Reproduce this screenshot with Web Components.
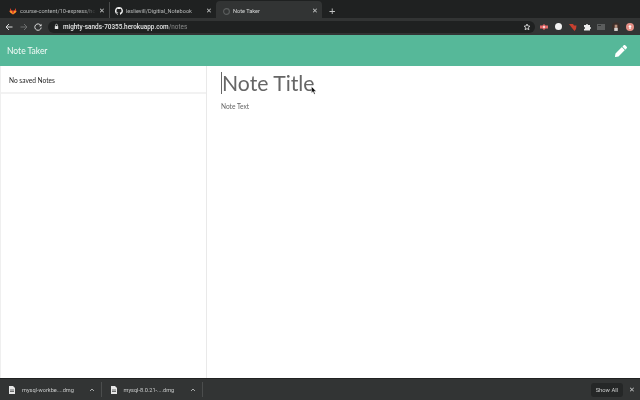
<!DOCTYPE html>
<html>
<head>
<meta charset="utf-8">
<title>Note Taker</title>
<style>
  html, body { margin: 0; height: 100%; overflow: hidden; background: #fff; }
  body { display: flex; flex-direction: column; width: 640px; height: 400px; filter: blur(.3px); }
</style>
</head>
<body>
<tab-strip>
  <browser-tab icon="gitlab" style="width:110px;padding-left:9px">course-content/10-express/ho</browser-tab>
  <browser-tab icon="github" style="width:106px;padding-left:5px">leslievill/Digitial_Notebook</browser-tab>
  <browser-tab icon="globe" active>Note Taker</browser-tab>
</tab-strip>
<url-bar></url-bar>
<note-nav>Note Taker</note-nav>
<note-main>
  <note-list>No saved Notes</note-list>
  <note-editor></note-editor>
</note-main>
<download-shelf>
  <download-item>mysql-workbe....dmg</download-item>
  <download-item>mysql-8.0.21-....dmg</download-item>
</download-shelf>

<script>
class TabStrip extends HTMLElement {
  constructor() {
    super();
    this.attachShadow({ mode: "open" }).innerHTML = `
    <style>
      :host { display: flex; align-items: flex-end; height: 18px; background: #1f2121; flex: none; }
      .plus { color: #c4c6c6; font: 11px/15px "Liberation Sans", sans-serif; margin-left: 7px; align-self: center; padding-top: 4px; }
    </style>
    <slot></slot>
    <span class="plus">+</span>`;
  }
}
customElements.define("tab-strip", TabStrip);

const TAB_ICONS = {
  gitlab: `<svg width="8" height="8" viewBox="0 0 16 16"><path fill="#e24329" d="M8 15 1 9.5 2.8 2l2 5h6.400l2-5L15 9.500z"/><path fill="#fca326" d="M8 15 1 9.500l3.800-2.500zM8 15l7-5.500-3.800-2.500z"/></svg>`,
  github: `<svg width="8" height="8" viewBox="0 0 16 16"><path fill="#f2f2f2" d="M8 0a8 8 0 0 0-2.500 15.600c.4.100.5-.2.500-.4v-1.400c-2.200.5-2.700-1-2.700-1-.4-.9-.9-1.200-.9-1.200-.7-.5.100-.5.100-.5.800.100 1.200.8 1.200.8.700 1.200 1.900.9 2.300.7.100-.5.300-.9.500-1.100-1.800-.2-3.600-.9-3.600-4 0-.9.300-1.600.8-2.100-.1-.2-.4-1 .1-2.100 0 0 .7-.2 2.200.8a7.500 7.500 0 0 1 4 0c1.500-1 2.200-.8 2.200-.8.400 1.100.2 1.900.1 2.100.5.600.8 1.300.8 2.100 0 3.100-1.900 3.700-3.700 3.900.3.300.6.800.6 1.500v2.200c0 .2.100.5.600.4A8 8 0 0 0 8 0z"/></svg>`,
  globe: `<svg width="7" height="7" viewBox="0 0 8 8"><circle cx="4" cy="4" r="3.300" fill="none" stroke="#5b5e5e" stroke-width="1.300"/></svg>`
};

class BrowserTab extends HTMLElement {
  constructor() {
    super();
    this.attachShadow({ mode: "open" });
  }
  connectedCallback() {
    this.shadowRoot.innerHTML = `
    <style>
      :host { display: flex; align-items: center; gap: 3px; box-sizing: border-box; height: 16px; padding: 2px 4px 0 5px; color: #b9bbbb; font: 5.600px "Roboto", sans-serif; }
      :host(:first-child) { border-right: 1px solid #4a4c4c; }
      :host([active]) { background: #323434; border-radius: 4px 4px 0 0; color: #d7d8d8; height: 17px; width: 106px; padding: 3px 4px 0 6px; gap: 3px; }
      .icon { width: 8px; height: 10px; display: flex; align-items: center; justify-content: center; flex: none; }
      .label { flex: 1; white-space: nowrap; overflow: hidden; -webkit-mask-image: linear-gradient(to right, #000 85%, transparent); mask-image: linear-gradient(to right, #000 85%, transparent); }
      .x { flex: none; color: #c9cbcb; font-size: 6.500px; }
    </style>
    <span class="icon">${TAB_ICONS[this.getAttribute("icon")]}</span>
    <span class="label"><slot></slot></span>
    <span class="x">✕</span>`;
  }
}
customElements.define("browser-tab", BrowserTab);

class UrlBar extends HTMLElement {
  constructor() {
    super();
    this.attachShadow({ mode: "open" }).innerHTML = `
    <style>
      :host { display: flex; align-items: center; height: 17px; background: #323434; flex: none; padding: 0 6px 0 5px; }
      .nav { display: flex; gap: 6.500px; align-items: center; flex: none; margin-right: 6px; }
      .pill { flex: 1; display: flex; align-items: center; height: 12px; background: #1f2121; border-radius: 6px; padding: 0 4px 0 6px; gap: 4px; font: 500 6.400px "Roboto", sans-serif; color: #e4e5e5; }
      .pill .path { color: #8a8c8c; font-weight: 400; }
      .url { flex: 1; white-space: nowrap; }
      .exts { display: flex; align-items: center; gap: 6.300px; margin-left: 5px; flex: none; }
      .exts i { display: block; width: 7px; height: 7px; border-radius: 50%; margin: 0 .5px; }
      svg { display: block; flex: none; }
    </style>
    <div class="nav">
      <svg width="8" height="8" viewBox="0 0 8 8"><path d="M7.500 4H1M4 1 1 4l3 3" fill="none" stroke="#d9dada" stroke-width="1"/></svg>
      <svg width="8" height="8" viewBox="0 0 8 8"><path d="M.5 4H7M4 1l3 3-3 3" fill="none" stroke="#6d6f6f" stroke-width="1"/></svg>
      <svg width="8" height="8" viewBox="0 0 8 8"><path d="M6.800 2.500A3.200 3.200 0 1 0 7.200 4.500" fill="none" stroke="#d9dada" stroke-width="1"/><path d="M7.500.8v2.500H5z" fill="#d9dada"/></svg>
    </div>
    <div class="pill">
      <svg width="5" height="7" viewBox="0 0 6 7"><rect x="1" y="3" width="4" height="3.500" fill="#e4e5e5"/><path d="M1.800 3V2a1.200 1.200 0 0 1 2.400 0v1" fill="none" stroke="#e4e5e5" stroke-width=".8"/></svg>
      <span class="url">mighty-sands-70355.herokuapp.com<span class="path">/notes</span></span>
      <svg width="8" height="8" viewBox="0 0 16 16"><path d="m8 2 1.800 4 4.200.4-3.200 2.800 1 4.300L8 11.200 4.200 13.500l1-4.300L2 6.400 6.200 6z" fill="none" stroke="#d5d6d6" stroke-width="1.800"/></svg>
    </div>
    <div class="exts">
      <svg width="8" height="6" viewBox="0 0 8 6"><path d="M0 1.500h2.500L4 0l1.500 1.500H8v3H5.500L4 6 2.500 4.500H0z" fill="#e46a6a"/><rect x="3" y="2" width="2" height="2" fill="#f6d0d0"/></svg>
      <i style="background:#f2f2f2"></i>
      <svg width="8" height="8" viewBox="0 0 8 8"><path d="M0 1h4l1 1.500h2.500L7 6 5.500 8 3 5 1.500 3z" fill="#c8402f"/></svg>
      <svg width="8" height="8" viewBox="0 0 8 8"><path d="M1 2h2a1 1 0 0 1 2 0h2v2a1 1 0 0 1 0 2v1.500H1V6a1 1 0 0 0 0-2z" fill="#eeeeee"/></svg>
      <svg width="8" height="6" viewBox="0 0 8 6"><rect width="8" height="6" fill="#5b5d5d"/><rect x="1" y="1" width="3" height="1" fill="#323434"/></svg>
      <svg width="8" height="11" viewBox="0 0 9 11"><circle cx="4.500" cy="5.500" r="4.500" fill="#3b2d28"/><path d="M3 3.500h3v3.500H3z" fill="#b98f7d"/><path d="M2.500 7h4v3.500h-4z" fill="#d6d2d0"/></svg>
      <svg width="8" height="8" viewBox="0 0 8 8"><circle cx="4" cy="4" r="4" fill="#e58f86"/><path d="M4 1.800 2.300 4h1v2h1.400V4h1z" fill="#fff"/></svg>
    </div>`;
  }
}
customElements.define("url-bar", UrlBar);

class NoteNav extends HTMLElement {
  constructor() {
    super();
    this.attachShadow({ mode: "open" }).innerHTML = `
    <style>
      :host { display: flex; align-items: center; justify-content: space-between; box-sizing: border-box; height: 31px; padding: 0 13px 0 7px; background: #56b899; color: #f4fbf8; font: 8.500px "Lato", sans-serif; flex: none; }
      svg { display: block; }
    </style>
    <span><slot></slot></span>
    <svg width="12" height="12" viewBox="0 0 512 512"><path fill="#fff" d="M497.900 142.100l-46.100 46.100c-4.700 4.700-12.300 4.700-17 0l-111-111c-4.700-4.700-4.700-12.300 0-17l46.100-46.100c18.700-18.700 49.100-18.700 67.900 0l60.100 60.100c18.800 18.700 18.800 49.100 0 67.900zM284.200 99.800L21.600 362.400.4 483.900c-2.900 16.400 11.400 30.600 27.800 27.800l121.500-21.300 262.600-262.600c4.700-4.700 4.700-12.300 0-17l-111-111c-4.800-4.700-12.400-4.700-17.100 0z"/></svg>`;
  }
}
customElements.define("note-nav", NoteNav);

class NoteMain extends HTMLElement {
  constructor() {
    super();
    this.attachShadow({ mode: "open" }).innerHTML = `
    <style>
      :host { display: grid; grid-template-columns: 207px 1fr; flex: 1; min-height: 0; background: #fff; }
    </style>
    <slot></slot>`;
  }
}
customElements.define("note-main", NoteMain);

class NoteList extends HTMLElement {
  constructor() {
    super();
    this.attachShadow({ mode: "open" }).innerHTML = `
    <style>
      :host { display: block; box-sizing: border-box; border-left: 1px solid #efefef; border-right: 1px solid #e9e9e9; font: 6.600px "Lato", sans-serif; color: #1f1f1f; }
      .item { box-sizing: border-box; height: 28px; padding: 10px 8px 0; border-bottom: 2px solid #f2f2f2; }
    </style>
    <div class="item"><slot></slot></div>`;
  }
}
customElements.define("note-list", NoteList);

class NoteEditor extends HTMLElement {
  constructor() {
    super();
    this.attachShadow({ mode: "open" }).innerHTML = `
    <style>
      :host { display: block; padding: 4px 14px 0; font-family: "Lato", sans-serif; color: #666; position: relative; }
      .title { display: flex; align-items: center; height: 26px; font-size: 21.200px; line-height: 26px; white-space: nowrap; }
      .caret { width: 1px; height: 22px; background: #666; flex: none; margin-right: 0; }
      .text { font-size: 6.600px; margin-top: 6px; color: #666; }
      .cursor { position: absolute; left: 104px; top: 20px; }
    </style>
    <div class="title"><span class="caret"></span>Note Title</div>
    <div class="text">Note Text</div>
    <svg class="cursor" width="6" height="9" viewBox="0 0 6 9"><path d="M.5.5v6.500l1.500-1.400L3.200 8.300l1-.5L3 5.200h2.200z" fill="#111" stroke="#fff" stroke-width=".4"/></svg>`;
  }
}
customElements.define("note-editor", NoteEditor);

class DownloadShelf extends HTMLElement {
  constructor() {
    super();
    this.attachShadow({ mode: "open" }).innerHTML = `
    <style>
      :host { display: flex; align-items: center; box-sizing: border-box; height: 22px; background: #323434; border-top: 1px solid #212222; flex: none; font: 5.600px "Roboto", sans-serif; color: #c9cbcb; padding-right: 4px; }
      .show { margin-left: auto; background: #252727; border-radius: 3px; padding: 4px 5px; color: #d0d1d1; font-size: 5.800px; }
      .x { margin-left: 5px; font-size: 6.500px; color: #c6c8c8; width: 8px; text-align: center; }
    </style>
    <slot></slot>
    <span class="show">Show All</span>
    <span class="x">✕</span>`;
  }
}
customElements.define("download-shelf", DownloadShelf);

class DownloadItem extends HTMLElement {
  constructor() {
    super();
    this.attachShadow({ mode: "open" }).innerHTML = `
    <style>
      :host { display: flex; align-items: center; box-sizing: border-box; width: 101.500px; height: 15px; padding: 0 6px 0 9px; border-right: 1px solid #4b4d4d; }
      svg { display: block; flex: none; }
      .name { flex: 1; margin-left: 7px; white-space: nowrap; }
    </style>
    <svg width="6" height="8" viewBox="0 0 6 8"><path d="M0 0h4l2 2v6H0z" fill="#e6e6e6"/><path d="M1 4h4M1 5.500h4" stroke="#323434" stroke-width=".7"/></svg>
    <span class="name"><slot></slot></span>
    <svg width="6" height="4" viewBox="0 0 6 4"><path d="M1 3 3 1l2 2" fill="none" stroke="#b6b8b8" stroke-width=".9"/></svg>`;
  }
}
customElements.define("download-item", DownloadItem);
</script>
</body>
</html>
